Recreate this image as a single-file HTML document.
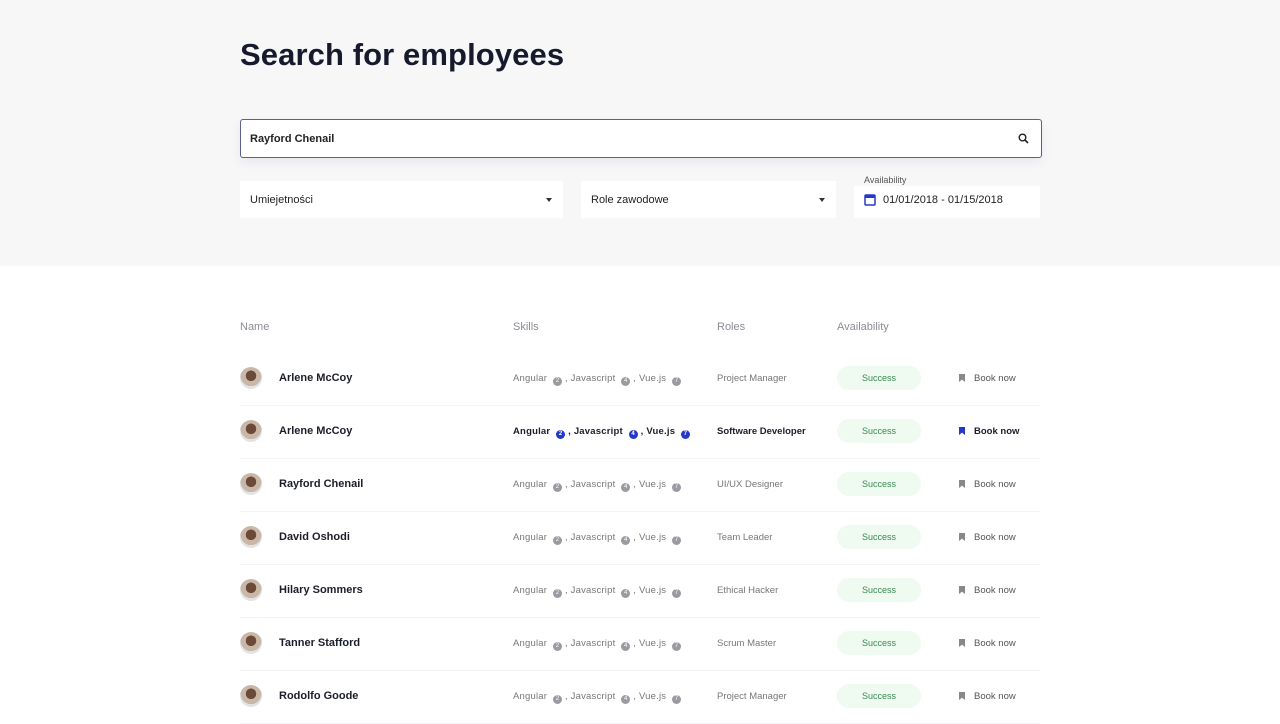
<!DOCTYPE html>
<html><head><style>
body{margin:0;width:1280px;height:720px;overflow:hidden;background:#fff;font-family:"Liberation Sans",sans-serif;color:#1b1d2a}
.top{position:absolute;left:0;top:0;width:1280px;height:266px;background:#f7f7f8}
h1{position:absolute;left:240px;top:37px;margin:0;font-size:31px;font-weight:bold;letter-spacing:0.1px;color:#161a2c}
.search{position:absolute;left:240px;top:119px;width:800px;height:37px;border:1px solid #5a6190;border-radius:3px;background:#fff;box-shadow:0 4px 10px rgba(60,60,100,.08)}
.search span{position:absolute;left:9px;top:13px;font-size:11px;font-weight:bold;color:#222}
.box{position:absolute;top:181px;height:37px;background:#fff}
.box span{position:absolute;left:10px;top:13px;font-size:11px;color:#222}
.arr{position:absolute;top:17px;width:0;height:0;border-left:3px solid transparent;border-right:3px solid transparent;border-top:4px solid #333}
.th{position:absolute;top:321px;font-size:11px;color:#8a8c95}
.row{position:absolute;left:240px;width:800px;height:53px;border-bottom:1px solid #f4f4f6}
.av{position:absolute;left:0;top:15px;width:22px;height:22px;border-radius:50%;background:radial-gradient(circle at 50% 40%,#6b4a3a 0 30%,#c9b8a8 31% 60%,#e3e3e6 61%)}
.nm{position:absolute;left:39px;top:20px;font-size:11px;font-weight:bold;color:#1b1d2a}
.sk{position:absolute;left:273px;top:21px;font-size:9.5px;color:#777;letter-spacing:0.2px;line-height:11px}
.b{display:inline-block;width:9px;height:9px;border-radius:50%;background:#9a9aa0;color:#fff;font-size:6px;line-height:9px;text-align:center;vertical-align:-1px;margin:0 3px;font-style:normal}
.rl{position:absolute;left:477px;top:21px;font-size:9.5px;color:#777}
.st{position:absolute;left:597px;top:14px;width:84px;height:24px;border-radius:12px;background:#effaf1;color:#3a8a52;font-size:9px;text-align:center;line-height:24px}
.bk{position:absolute;left:719px;top:21px;font-size:9.5px;color:#555}
.bm{display:inline-block;width:6px;height:8px;background:#888;margin-right:9px;vertical-align:-1px;clip-path:polygon(0 0,100% 0,100% 100%,50% 70%,0 100%)}
.act .sk,.act .rl,.act .bk{color:#1b1d2a;font-weight:bold}
.act .b{background:#2438c9}.act .bm{background:#2438c9}
</style></head><body>
<div class="top"></div>
<h1>Search for employees</h1>
<div class="search"><span>Rayford Chenail</span>
<svg style="position:absolute;right:12px;top:13px" width="11" height="11" viewBox="0 0 11 11"><circle cx="4.5" cy="4.5" r="3.3" fill="none" stroke="#222" stroke-width="1.4"/><path d="M7 7l3 3" stroke="#222" stroke-width="1.6"/></svg></div>
<div class="box" style="left:240px;width:323px"><span>Umiejetności</span><i class="arr" style="left:306px"></i></div>
<div class="box" style="left:581px;width:255px"><span>Role zawodowe</span><i class="arr" style="left:238px"></i></div>
<div style="position:absolute;left:864px;top:175px;font-size:9px;color:#555;z-index:2">Availability</div>
<div class="box" style="left:854px;width:186px;top:186px;height:32px"><svg style="position:absolute;left:10px;top:7px" width="12" height="13" viewBox="0 0 12 13"><rect x="1" y="2" width="10" height="10" rx="1" fill="none" stroke="#2438c9" stroke-width="1.5"/><rect x="1" y="2" width="10" height="3" fill="#2438c9"/></svg><span style="left:29px;top:8px">01/01/2018 - 01/15/2018</span></div>
<div class="th" style="left:240px">Name</div><div class="th" style="left:513px">Skills</div><div class="th" style="left:717px">Roles</div><div class="th" style="left:837px">Availability</div>
<div class="row" style="top:352px"><div class="av"></div><div class="nm">Arlene McCoy</div><div class="sk">Angular <i class="b">2</i>, Javascript <i class="b">4</i>, Vue.js <i class="b">7</i></div><div class="rl">Project Manager</div><div class="st">Success</div><div class="bk"><i class="bm"></i>Book now</div></div>
<div class="row act" style="top:405px"><div class="av"></div><div class="nm">Arlene McCoy</div><div class="sk">Angular <i class="b">2</i>, Javascript <i class="b">4</i>, Vue.js <i class="b">7</i></div><div class="rl">Software Developer</div><div class="st">Success</div><div class="bk"><i class="bm"></i>Book now</div></div>
<div class="row" style="top:458px"><div class="av"></div><div class="nm">Rayford Chenail</div><div class="sk">Angular <i class="b">2</i>, Javascript <i class="b">4</i>, Vue.js <i class="b">7</i></div><div class="rl">UI/UX Designer</div><div class="st">Success</div><div class="bk"><i class="bm"></i>Book now</div></div>
<div class="row" style="top:511px"><div class="av"></div><div class="nm">David Oshodi</div><div class="sk">Angular <i class="b">2</i>, Javascript <i class="b">4</i>, Vue.js <i class="b">7</i></div><div class="rl">Team Leader</div><div class="st">Success</div><div class="bk"><i class="bm"></i>Book now</div></div>
<div class="row" style="top:564px"><div class="av"></div><div class="nm">Hilary Sommers</div><div class="sk">Angular <i class="b">2</i>, Javascript <i class="b">4</i>, Vue.js <i class="b">7</i></div><div class="rl">Ethical Hacker</div><div class="st">Success</div><div class="bk"><i class="bm"></i>Book now</div></div>
<div class="row" style="top:617px"><div class="av"></div><div class="nm">Tanner Stafford</div><div class="sk">Angular <i class="b">2</i>, Javascript <i class="b">4</i>, Vue.js <i class="b">7</i></div><div class="rl">Scrum Master</div><div class="st">Success</div><div class="bk"><i class="bm"></i>Book now</div></div>
<div class="row" style="top:670px"><div class="av"></div><div class="nm">Rodolfo Goode</div><div class="sk">Angular <i class="b">2</i>, Javascript <i class="b">4</i>, Vue.js <i class="b">7</i></div><div class="rl">Project Manager</div><div class="st">Success</div><div class="bk"><i class="bm"></i>Book now</div></div>
</body></html>
